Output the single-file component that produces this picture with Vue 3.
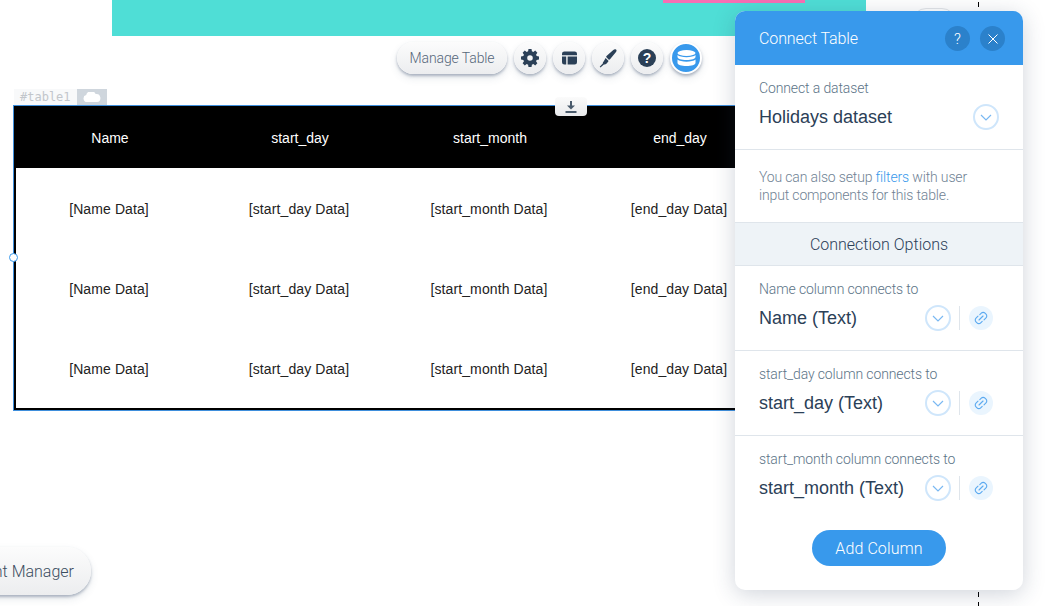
<script setup>
const columns = ['Name', 'start_day', 'start_month', 'end_day']
const rows = [1, 2, 3]
const connections = [
  { label: 'Name column connects to', value: 'Name (Text)' },
  { label: 'start_day column connects to', value: 'start_day (Text)' },
  { label: 'start_month column connects to', value: 'start_month (Text)' }
]
</script>

<template>
  <div class="stage">
    <div class="strip"><div class="pink"></div></div>
    <div class="ghost-pill"></div>
    <div class="guide guide-top"></div>
    <div class="guide guide-bottom"></div>

    <div class="toolbar">
      <button class="tool pill">Manage Table</button>
      <button class="tool round">
        <svg width="18" height="18" viewBox="0 0 20 20"><path fill="#2b4057" fill-rule="evenodd" d="M8.300 0h3.400l.4 2.600 1.600.7 2.100-1.500 2.400 2.400-1.500 2.100.7 1.600 2.600.4v3.400l-2.600.4-.7 1.600 1.500 2.100-2.400 2.400-2.100-1.500-1.600.7-.4 2.600H8.300l-.4-2.600-1.600-.7-2.100 1.500-2.400-2.400 1.500-2.100-.7-1.600L0 11.700V8.300l2.600-.4.7-1.600-1.500-2.100 2.400-2.400 2.100 1.500 1.600-.7zM10 6.900a3.100 3.100 0 1 0 0 6.200 3.100 3.100 0 0 0 0-6.200z"/></svg>
      </button>
      <button class="tool round">
        <svg width="15" height="14" viewBox="0 0 16 14"><path fill="#2b4057" d="M2.500 0h11A2.500 2.500 0 0 1 16 2.500V4H0V2.500A2.500 2.500 0 0 1 2.500 0zM0 5.500h4.500V14H2.500A2.500 2.500 0 0 1 0 11.500zM6 5.500h10v6A2.500 2.500 0 0 1 13.500 14H6z"/></svg>
      </button>
      <button class="tool round">
        <svg width="18" height="19" viewBox="0 0 18 19"><path fill="#2b4057" d="M17 .6c.8.6.7 1.600 0 2.500l-6 7.200c-.5.600-1 .5-1.400.1L7.400 8.300c-.4-.4-.4-.9.100-1.400L14.300 1c.9-.8 1.900-1 2.700-.4z"/><path fill="#2b4057" d="M6.600 9l3 2.900-1.500 2c-.9 1.100-2.100 1.500-3.200 1.500L1.500 18.500l-.8-.7 3.300-3.500c-.4-.5.300-1.400.8-2.100z"/></svg>
      </button>
      <button class="tool round">
        <svg width="18" height="18" viewBox="0 0 18 18"><circle cx="9" cy="9" r="9" fill="#2b4057"/><text x="9" y="14" text-anchor="middle" class="qmark">?</text></svg>
      </button>
      <button class="tool round active">
        <svg width="19" height="16" viewBox="0 0 19 16"><g fill="#fff"><ellipse cx="9.500" cy="3" rx="9" ry="3"/><path d="M.5 5.100C2 6.600 5.500 7.200 9.500 7.200s7.500-.6 9-2.100v2c0 1.700-4 3-9 3s-9-1.300-9-3z"/><path d="M.5 9.600C2 11.100 5.500 11.700 9.500 11.700s7.500-.6 9-2.100v3.400c0 1.700-4 3-9 3s-9-1.300-9-3z"/></g></svg>
      </button>
    </div>

    <div class="tag">
      <span class="tag-id">#table1</span>
      <span class="tag-cloud">
        <svg width="18" height="10" viewBox="0 0 18 10"><path fill="#fff" d="M4 10a3.500 3.500 0 0 1-.8-6.900A5 5 0 0 1 12.600 2 4 4 0 0 1 14 10z"/></svg>
      </span>
    </div>

    <div class="table-wrap">
      <div class="row head">
        <div v-for="c in columns" :key="c" class="cell">{{ c }}</div>
      </div>
      <div class="table-body">
        <div v-for="r in rows" :key="r" class="row body">
          <div v-for="c in columns" :key="c" class="cell">[{{ c }} Data]</div>
        </div>
      </div>
      <div class="handle"></div>
      <div class="download">
        <svg width="12" height="12" viewBox="0 0 12 12"><path fill="#4a5b6c" d="M5 0h2v4.500h3L6 8.500l-4-4h3zM.5 10h11v2H.5z"/></svg>
      </div>
    </div>

    <button class="tool pill manager"><span>Component Manager</span></button>

    <aside class="panel">
      <header class="panel-head">
        <span class="panel-title">Connect Table</span>
        <span class="head-btn">?</span>
        <span class="head-btn">
          <svg width="10" height="10" viewBox="0 0 10 10"><path stroke="#fff" stroke-width="1" fill="none" d="M.5.5l9 9M9.500.5l-9 9"/></svg>
        </span>
      </header>

      <section class="field dataset">
        <div class="label">Connect a dataset</div>
        <div class="value-row">
          <span class="value">Holidays dataset</span>
          <span class="chev">
            <svg width="12" height="7" viewBox="0 0 12 7"><path d="M1 1l5 5 5-5" fill="none" stroke="#7ab8f2" stroke-width="1.200"/></svg>
          </span>
        </div>
      </section>

      <section class="hint">
        You can also setup <span class="link">filters</span> with user<br>input components for this table.
      </section>

      <div class="options">Connection Options</div>

      <section v-for="c in connections" :key="c.label" class="field conn">
        <div class="label">{{ c.label }}</div>
        <div class="value-row">
          <span class="value">{{ c.value }}</span>
          <span class="chev">
            <svg width="12" height="7" viewBox="0 0 12 7"><path d="M1 1l5 5 5-5" fill="none" stroke="#7ab8f2" stroke-width="1.200"/></svg>
          </span>
          <span class="divider"></span>
          <span class="chain">
            <svg width="14" height="14" viewBox="0 0 14 14"><g fill="none" stroke="#5aa9f0" stroke-width="1.100" stroke-linecap="round"><path d="M5.800 3.600l1.500-1.500a2.600 2.600 0 0 1 3.700 0l1 1a2.600 2.600 0 0 1 0 3.700L10 8.800"/><path d="M8.200 10.400l-1.500 1.500a2.600 2.600 0 0 1-3.700 0l-1-1a2.600 2.600 0 0 1 0-3.700L4 5.200"/><path d="M5 9l4-4"/></g></svg>
          </span>
        </div>
      </section>

      <div class="add-row"><button class="add">Add Column</button></div>
    </aside>
  </div>
</template>

<style>
html, body { margin: 0; background: #fff; overflow: hidden; }
</style>

<style scoped>
.stage {
  position: relative;
  width: 1048px;
  height: 606px;
  overflow: hidden;
  background: #fff;
  font-family: "Liberation Sans", Arial, sans-serif;
}
.strip {
  position: absolute;
  left: 112px;
  top: 0;
  width: 754px;
  height: 36px;
  background: #4fded6;
}
.pink {
  position: absolute;
  left: 551px;
  top: 0;
  width: 142px;
  height: 3px;
  background: #f76fb4;
}
.ghost-pill {
  position: absolute;
  left: 912px;
  top: 8px;
  width: 42px;
  height: 30px;
  border: 1px solid #e3e5e8;
  border-radius: 14px;
  background: #fff;
}
.guide {
  position: absolute;
  left: 978px;
  width: 1px;
  background: repeating-linear-gradient(#000 0 5px, transparent 5px 10px);
}
.guide-top { top: 2px; height: 5px; }
.guide-bottom { top: 592px; height: 14px; }

.toolbar {
  position: absolute;
  left: 397px;
  top: 42px;
  display: flex;
  gap: 7px;
}
.tool {
  display: flex;
  align-items: center;
  justify-content: center;
  border: none;
  padding: 0;
  background: linear-gradient(#fcfcfc, #ecedef);
  box-shadow: 0 2px 3px rgba(60, 80, 110, 0.38), 0 4px 8px rgba(60, 80, 110, 0.12);
  color: #55677a;
  font-family: "Roboto", sans-serif;
  cursor: pointer;
}
.pill {
  width: 110px;
  height: 32px;
  border-radius: 16px;
  font-size: 14px;
  font-weight: 300;
  letter-spacing: -0.1px;
}
.round {
  width: 32px;
  height: 32px;
  border-radius: 50%;
}
.active {
  background: #3899ec;
  border: 2px solid #fff;
  box-sizing: border-box;
}
.qmark {
  fill: #fff;
  font-family: "Liberation Sans", sans-serif;
  font-weight: 700;
  font-size: 14px;
}

.tag {
  position: absolute;
  left: 14px;
  top: 89px;
  height: 16px;
  display: flex;
}
.tag-id {
  width: 63px;
  padding-left: 6px;
  box-sizing: border-box;
  background: #f8f9fa;
  color: #c2c6cb;
  font-family: "DejaVu Sans Mono", monospace;
  font-size: 12px;
  line-height: 17px;
}
.tag-cloud {
  width: 30px;
  background: #cfd6dd;
  display: flex;
  align-items: center;
  justify-content: center;
}

.table-wrap {
  position: absolute;
  left: 13px;
  top: 105px;
  width: 762px;
  height: 306px;
  box-sizing: border-box;
  border-top: 1px solid #3f8fdc;
  border-left: 1px solid #3f8fdc;
  border-bottom: 1px solid #3f8fdc;
}
.row {
  display: flex;
}
.head {
  height: 62px;
  background: #000;
  color: #fff;
  padding: 2px 0 0 1px;
  box-sizing: border-box;
}
.table-body {
  height: 242px;
  box-sizing: border-box;
  border-left: 2px solid #000;
  border-bottom: 2px solid #000;
}
.body {
  height: 80px;
  color: #222;
  letter-spacing: 0.1px;
  padding-top: 2px;
  box-sizing: border-box;
}
.body .cell { margin-left: -2px; margin-right: 2px; }
.cell {
  width: 190px;
  flex: none;
  display: flex;
  align-items: center;
  justify-content: center;
  font-size: 14px;
}
.handle {
  position: absolute;
  left: -5px;
  top: 147px;
  width: 7px;
  height: 7px;
  border: 1px solid #3899ec;
  border-radius: 50%;
  background: #fff;
}
.download {
  position: absolute;
  left: 541px;
  top: -9px;
  width: 32px;
  height: 19px;
  border-radius: 4px;
  background: linear-gradient(#fbfbfb, #e9eaec);
  display: flex;
  align-items: center;
  justify-content: center;
}

.manager {
  position: absolute;
  left: -74px;
  top: 547px;
  width: 165px;
  height: 48px;
  border-radius: 24px;
  font-size: 16px;
  letter-spacing: 0;
  color: #3b4d60;
  justify-content: flex-end;
  padding: 0 17px 0 0;
  box-sizing: border-box;
  white-space: nowrap;
}

.panel {
  position: absolute;
  left: 735px;
  top: 11px;
  width: 288px;
  height: 579px;
  background: #fff;
  border-radius: 10px;
  box-shadow: 0 4px 22px rgba(40, 60, 90, 0.22);
  overflow: hidden;
  display: flex;
  flex-direction: column;
  font-family: "Liberation Sans", sans-serif;
}
.panel-head {
  height: 54px;
  flex: none;
  background: #3899ec;
  display: flex;
  align-items: center;
  padding: 0 18px 0 24px;
  gap: 10px;
  color: #fff;
}
.panel-title {
  flex: 1;
  font-family: "Roboto", sans-serif;
  font-size: 16px;
  font-weight: 300;
  letter-spacing: -0.1px;
}
.head-btn {
  width: 25px;
  height: 25px;
  border-radius: 50%;
  background: #2b81cb;
  display: flex;
  align-items: center;
  justify-content: center;
  font-family: "Roboto", sans-serif;
  font-size: 15px;
  font-weight: 300;
  margin-top: 1px;
}
.field {
  padding: 15px 24px 0;
  border-bottom: 1px solid #dfe5eb;
  box-sizing: border-box;
  height: 85px;
}
.label {
  font-size: 14px;
  line-height: 17px;
  color: #5c7487;
  font-family: "Roboto", sans-serif;
  font-weight: 300;
  letter-spacing: -0.12px;
}
.value-row {
  display: flex;
  align-items: center;
  height: 26px;
  margin-top: 7px;
}
.value {
  flex: 1;
  font-size: 18px;
  color: #2b4057;
  white-space: nowrap;
}
.chev {
  width: 26px;
  height: 26px;
  box-sizing: border-box;
  border: 2px solid #cfe6fb;
  border-radius: 50%;
  display: flex;
  align-items: center;
  justify-content: center;
  flex: none;
}
.conn .chev { margin-right: 8px; }
.divider {
  width: 1px;
  height: 24px;
  background: #dfe5eb;
  margin-right: 9px;
}
.chain {
  width: 24px;
  height: 24px;
  border-radius: 50%;
  background: #eaf5fe;
  display: flex;
  align-items: center;
  justify-content: center;
  margin-right: 6px;
}
.hint {
  height: 72px;
  flex: none;
  box-sizing: border-box;
  padding: 18px 24px 0;
  font-family: "Roboto", sans-serif;
  font-weight: 300;
  font-size: 14px;
  line-height: 18px;
  color: #6f8294;
  letter-spacing: -0.15px;
}
.link { color: #3899ec; }
.options {
  height: 44px;
  flex: none;
  box-sizing: border-box;
  background: #eef3f7;
  border-top: 1px solid #dfe5eb;
  border-bottom: 1px solid #dfe5eb;
  display: flex;
  align-items: center;
  justify-content: center;
  font-family: "Roboto", sans-serif;
  font-weight: 300;
  font-size: 16px;
  color: #2b4057;
}
.conn:last-of-type { border-bottom: none; }
.add-row {
  display: flex;
  justify-content: center;
  padding-top: 9px;
}
.add {
  width: 134px;
  height: 36px;
  border: none;
  border-radius: 18px;
  background: #3899ec;
  color: #fff;
  font-family: "Roboto", sans-serif;
  font-size: 16px;
  font-weight: 300;
  letter-spacing: 0.1px;
}
</style>
